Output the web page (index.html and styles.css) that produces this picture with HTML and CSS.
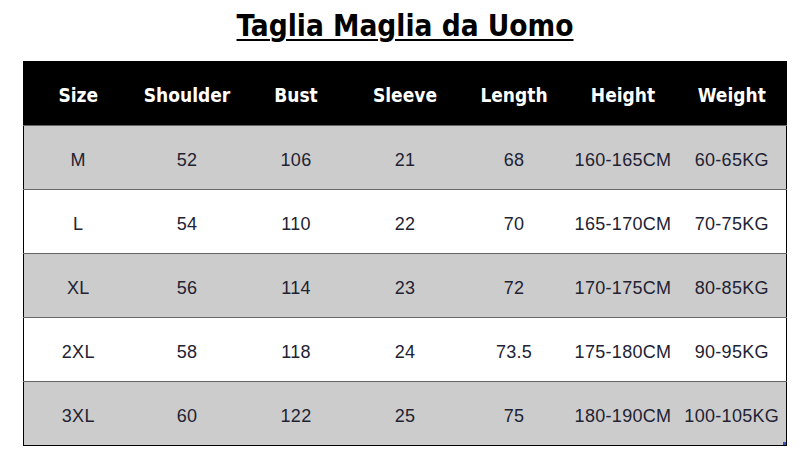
FILE: index.html
```html
<!DOCTYPE html>
<html>
<head>
<meta charset="utf-8">
<link rel="stylesheet" href="styles.css">
</head>
<body>
<div class="page">
  <h1 class="title">Taglia Maglia da Uomo</h1>
  <div class="table-wrap">
    <table class="size-table">
      <thead>
        <tr><th>Size</th><th>Shoulder</th><th>Bust</th><th>Sleeve</th><th>Length</th><th>Height</th><th>Weight</th></tr>
      </thead>
      <tbody>
        <tr class="alt"><td>M</td><td>52</td><td>106</td><td>21</td><td>68</td><td>160-165CM</td><td>60-65KG</td></tr>
        <tr><td>L</td><td>54</td><td>110</td><td>22</td><td>70</td><td>165-170CM</td><td>70-75KG</td></tr>
        <tr class="alt"><td>XL</td><td>56</td><td>114</td><td>23</td><td>72</td><td>170-175CM</td><td>80-85KG</td></tr>
        <tr><td>2XL</td><td>58</td><td>118</td><td>24</td><td>73.5</td><td>175-180CM</td><td>90-95KG</td></tr>
        <tr class="alt"><td>3XL</td><td>60</td><td>122</td><td>25</td><td>75</td><td>180-190CM</td><td>100-105KG</td></tr>
      </tbody>
    </table>
    <span class="corner"></span>
  </div>
</div>
</body>
</html>
```
FILE: styles.css
```css
* { box-sizing: border-box; }
html, body { margin: 0; padding: 0; background: #fff; }
.page {
  width: 807px;
  height: 462px;
  padding: 7px 20px 0 23px;
}
.title {
  margin: 0;
  height: 54px;
  padding-top: 2px;
  text-align: center;
  font-family: "DejaVu Sans Condensed", "Liberation Sans", sans-serif;
  font-weight: bold;
  font-size: 29.5px;
  line-height: 34px;
  color: #000;
  text-decoration: underline;
  text-decoration-thickness: 2px;
  text-underline-offset: 3px;
}
.table-wrap { position: relative; width: 764px; }
.size-table {
  width: 764px;
  border-collapse: collapse;
  table-layout: fixed;
  border: 1px solid #000;
}
.size-table th {
  background: #000;
  color: #fff;
  height: 64px;
  font-family: "DejaVu Sans Condensed", "Liberation Sans", sans-serif;
  font-weight: bold;
  font-size: 19px;
  text-align: center;
  padding: 3px 0 0 0;
}
.size-table td {
  height: 64px;
  text-align: center;
  padding: 5px 0 0 0;
  font-family: "Liberation Sans", Arial, sans-serif;
  font-size: 18px;
  letter-spacing: 0.3px;
  color: #222233;
  border-top: 1px solid #666;
  background: #fff;
}
.size-table tr.alt td { background: #cccccc; }
.corner {
  position: absolute;
  right: 1px;
  bottom: 1px;
  width: 3px;
  height: 3px;
  background: #3050c0;
}
```
